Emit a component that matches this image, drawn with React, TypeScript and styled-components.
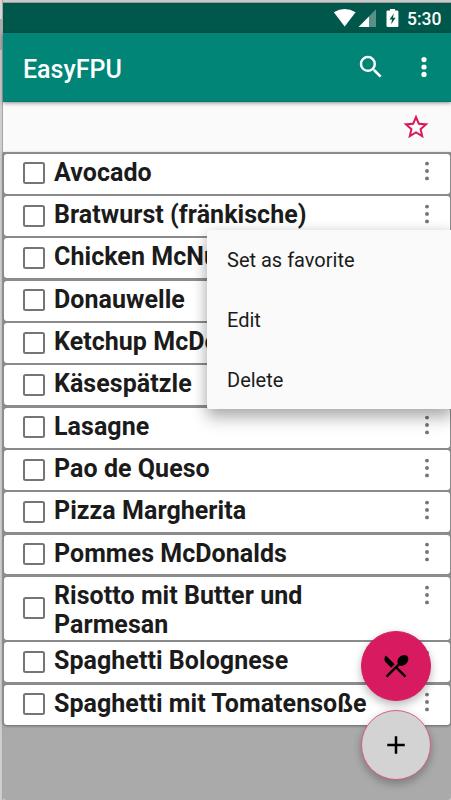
import React from "react";
import styled, { createGlobalStyle } from "styled-components";

const GlobalStyle = createGlobalStyle`
  * { box-sizing: border-box; }
  body { margin: 0; background: #cacaca; font-family: Roboto, sans-serif; overflow: hidden; }
  button { font-family: inherit; border: 0; padding: 0; background: none; }
  svg { display: block; }
`;

const Desktop = styled.div`
  display: grid;
  grid-template-columns: 3px 1fr;
  width: 451px;
  height: 800px;
  padding-top: 3px;
  overflow: hidden;
  position: relative;
  background: #cacaca;
`;

const Edge = styled.div`
  margin-top: -3px;
  background: linear-gradient(#d6d6d6 0 19px, #adadad 19px 50px, #cecece 50px);
  border-right: 1px solid #a6a6a6;
`;

const Phone = styled.main`
  display: flex;
  flex-direction: column;
  min-width: 0;
  background: #aaaaaa;
  border-radius: 0 0 4px 4px;
  box-shadow: 0 -1px 0 #9c9c9c;
`;

const StatusBar = styled.div`
  display: flex;
  align-items: center;
  justify-content: flex-end;
  height: 30px;
  flex: none;
  padding-right: 10px;
  background: #00574b;
  color: #fff;
`;

const Clock = styled.span`
  width: 34px;
  margin: 2px 0 0 8px;
  font-size: 17.5px;
  line-height: 30px;
  font-weight: 500;
  white-space: nowrap;
`;

const AppBar = styled.header`
  display: flex;
  align-items: center;
  height: 69px;
  flex: none;
  padding: 0 23.5px 0 20px;
  background: #008577;
  border-bottom: 1px solid #007b6e;
  color: #fff;
  position: relative;
  box-shadow: 0 1px 4px rgba(0, 0, 0, 0.45);
`;

const Title = styled.h1`
  flex: 1;
  margin: 5px 0 0;
  font-size: 25px;
  line-height: 30px;
  font-weight: 500;
`;

const SearchButton = styled.button`
  margin-right: 33.5px;
  color: #fff;
`;

const FilterBar = styled.div`
  display: flex;
  align-items: center;
  justify-content: flex-end;
  height: 50.3px;
  flex: none;
  padding: 0 20px 0 0;
  background: #fafafa;
`;

const FoodList = styled.ul`
  display: flex;
  flex-direction: column;
  gap: 2.4px;
  margin: 0;
  padding: 1.3px 1px 0;
  list-style: none;
  background: #8d8d8d;
  border-radius: 0 0 4px 4px;
  box-shadow: 0 1px 3px rgba(0, 0, 0, 0.4);
`;

const FoodCard = styled.li<{ $tall?: boolean }>`
  display: flex;
  align-items: center;
  height: ${(p) => (p.$tall ? 63 : 39.95)}px;
  padding: 0 18.7px 0 19px;
  background: #fff;
  border-radius: 3px;
  box-shadow: 0 0 1px #777;
`;

const Checkbox = styled.span`
  width: 22px;
  height: 22px;
  flex: none;
  margin-top: -0.4px;
  border: 2px solid #757575;
  border-radius: 2.5px;
`;

const FoodName = styled.span`
  align-self: flex-start;
  flex: 1;
  max-width: 330px;
  margin: 4.2px auto 0 9px;
  color: #1b1b1b;
  font-size: 25px;
  letter-spacing: 0.05px;
  line-height: 29.3px;
  font-weight: 700;
  white-space: pre-line;
`;

const RowMenu = styled.button`
  align-self: flex-start;
  margin-top: 7.9px;
  color: #757575;
`;

const Popup = styled.div`
  position: absolute;
  top: 229.5px;
  left: 207px;
  width: 246px;
  height: 179px;
  display: grid;
  grid-template-rows: repeat(3, 59.7px);
  background: #fafafa;
  border-radius: 2px;
  box-shadow: 0 10px 16px rgba(0, 0, 0, 0.25), 0 1px 13px rgba(0, 0, 0, 0.15);
`;

const PopupItem = styled.button`
  padding: 1.6px 20px 0;
  color: #1b1b1b;
  font-size: 20px;
  text-align: left;
`;

const Fab = styled.button<{ $plain?: boolean }>`
  display: grid;
  place-items: center;
  width: 70px;
  height: 70px;
  border-radius: 50%;
  color: #000;
  background: ${(p) => (p.$plain ? "#d3d3d3" : "#d81b60")};
  border: 1px solid #d81b60;
  border-color: ${(p) => (p.$plain ? "#dd5a86" : "#d81b60")};
  box-shadow: 0 5px 9px rgba(0, 0, 0, 0.2), 0 1px 9px rgba(0, 0, 0, 0.1);
`;

const FabStack = styled.div`
  position: absolute;
  top: 630.5px;
  left: 361px;
  display: grid;
  gap: 9.5px;
`;

const Dots = ({ big }: { big?: boolean }) => {
  const r = big ? 2.6 : 1.95;
  return (
    <svg width="8" height="20" viewBox="0 0 8 20" fill="currentColor" overflow="visible">
      {[-7.4, 0, 7.4].map((d) => (
        <circle key={d} cx="4" cy={10 + d} r={r} />
      ))}
    </svg>
  );
};

const StatusIcons = () => (
  <svg width="66" height="20" viewBox="333 8 66 20" fill="#fff">
    <path d="M333.8 12.2Q344.6 5.6 355.6 12.2L344.7 26.6Z" />
    <path d="M376 9.3V27H358.6Z" fillOpacity=".35" />
    <path d="M369 16.5V27H358.6Z" />
    <path
      fillRule="evenodd"
      d="M390 9H395V10.5H397.2Q398.4 10.5 398.4 11.7V25.8Q398.4 27 397.2 27H387.7Q386.5 27 386.5 25.8V11.7Q386.5 10.5 387.7 10.5H390ZM393.8 13.4L389.5 19.5H392L391.2 24.2L395.6 17.8H393Z"
    />
  </svg>
);

const foods = [
  "Avocado",
  "Bratwurst (fränkische)",
  "Chicken McNuggets",
  "Donauwelle",
  "Ketchup McDonalds",
  "Käsespätzle",
  "Lasagne",
  "Pao de Queso",
  "Pizza Margherita",
  "Pommes McDonalds",
  "Risotto mit Butter und\nParmesan",
  "Spaghetti Bolognese",
  "Spaghetti mit Tomatensoße",
];

export default function App() {
  return (
    <>
      <GlobalStyle />
      <Desktop>
        <Edge />
        <Phone>
          <StatusBar>
            <StatusIcons />
            <Clock>5:30</Clock>
          </StatusBar>
          <AppBar>
            <Title>EasyFPU</Title>
            <SearchButton aria-label="Search">
              <svg width="30" height="30" viewBox="0 0 24 24" fill="currentColor">
                <path d="M15.5 14h-.79l-.28-.27A6.47 6.47 0 0 0 16 9.5 6.5 6.5 0 1 0 9.5 16c1.61 0 3.09-.59 4.23-1.57l.27.28v.79l5 4.99L20.49 19l-4.99-5zm-6 0C7.01 14 5 11.99 5 9.5S7.01 5 9.5 5 14 7.01 14 9.5 11.99 14 9.5 14z" />
              </svg>
            </SearchButton>
            <Dots big />
          </AppBar>
          <FilterBar>
            <svg width="30" height="30" viewBox="0 0 24 24" fill="#d81b60">
              <path d="M22 9.24l-7.19-.62L12 2 9.19 8.63 2 9.24l5.46 4.73L5.82 21 12 17.27 18.18 21l-1.63-7.03L22 9.24zM12 15.4l-3.76 2.27 1-4.28-3.32-2.88 4.38-.38L12 6.1l1.71 4.04 4.38.38-3.32 2.88 1 4.28L12 15.4z" />
            </svg>
          </FilterBar>
          <FoodList>
            {foods.map((name) => (
              <FoodCard key={name} $tall={name.includes("\n")}>
                <Checkbox />
                <FoodName>{name}</FoodName>
                <RowMenu aria-label="More">
                  <Dots />
                </RowMenu>
              </FoodCard>
            ))}
          </FoodList>
        </Phone>
        <Popup>
          <PopupItem>Set as favorite</PopupItem>
          <PopupItem>Edit</PopupItem>
          <PopupItem>Delete</PopupItem>
        </Popup>
        <FabStack>
          <Fab aria-label="Eat">
            <svg width="30" height="30" viewBox="0 0 24 24" fill="currentColor">
              <path d="M8.1 13.34l2.83-2.83L3.91 3.5a4.008 4.008 0 0 0 0 5.66l4.19 4.18zm6.78-1.81c1.53.71 3.68.21 5.27-1.38 1.91-1.91 2.28-4.65.81-6.12-1.46-1.46-4.2-1.1-6.12.81-1.59 1.59-2.09 3.74-1.38 5.27L3.7 19.87l1.41 1.41L12 14.41l6.88 6.88 1.41-1.41L13.41 13l1.47-1.47z" />
            </svg>
          </Fab>
          <Fab $plain aria-label="Add">
            <svg width="30" height="30" viewBox="0 0 24 24" fill="currentColor">
              <path d="M19 13h-6v6h-2v-6H5v-2h6V5h2v6h6v2z" />
            </svg>
          </Fab>
        </FabStack>
      </Desktop>
    </>
  );
}
